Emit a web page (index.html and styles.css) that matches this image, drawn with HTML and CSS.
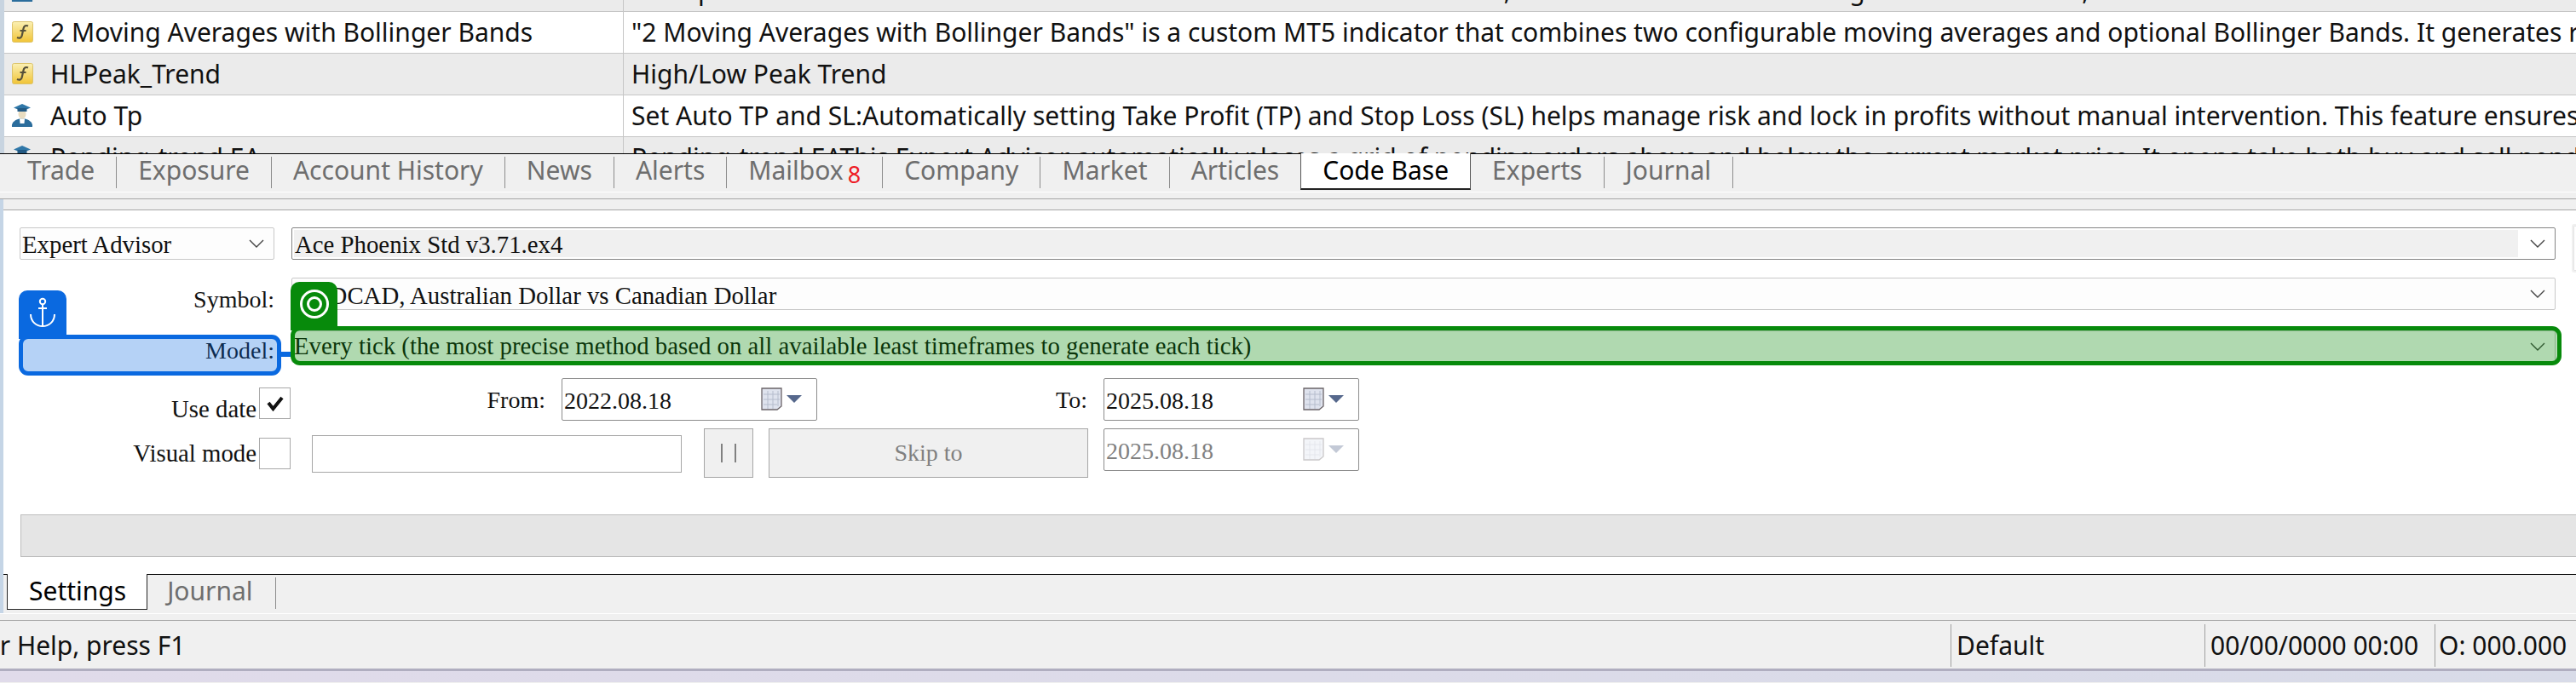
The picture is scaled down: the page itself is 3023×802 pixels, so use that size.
FILE: index.html
```html
<!DOCTYPE html>
<html lang="en">
<head>
    <meta charset="UTF-8">
    <title>Strategy Tester - Code Base</title>
    <link rel="stylesheet" href="styles.css">
</head>
<body>
    <!-- shared icons -->
    <svg class="defs" width="0" height="0">
        <defs>
            <linearGradient id="gold" x1="0" y1="0" x2="0" y2="1">
                <stop offset="0" stop-color="#fbf0b4"/>
                <stop offset="1" stop-color="#f1c436"/>
            </linearGradient>
            <symbol id="i-func" viewBox="0 0 25 25">
                <rect x="0.5" y="0.5" width="24" height="24" rx="2" fill="url(#gold)" stroke="#dcc36a"/>
                <path d="M19 5.5C15.5 4 14 6 13.4 9L11.8 16.5C11.2 19.5 9 20.5 6 19M9.5 11H16.5" fill="none" stroke="#55503a" stroke-width="2.2"/>
            </symbol>
            <symbol id="i-expert" viewBox="0 0 28 28">
                <path d="M2 28C1 22 7 19.5 10.5 18.5H17.5C21 19.5 27 22 26 28Z" fill="#2b6d9c"/>
                <path d="M11 18.5H17L16.5 24H11.500Z" fill="#fff"/>
                <ellipse cx="14" cy="13" rx="4.500" ry="5.500" fill="#e8dcc0"/>
                <path d="M14 1L24 5.500L14 9.500L4 5.500Z" fill="#2f77a8"/>
                <rect x="8.500" y="6" width="11" height="4" fill="#235a84"/>
            </symbol>
            <symbol id="i-chevron" viewBox="0 0 18 10">
                <path d="M1 1L9 9L17 1" fill="none" stroke="#444" stroke-width="1.400"/>
            </symbol>
            <symbol id="i-calendar" viewBox="0 0 48 27">
                <path d="M1 1H24V22L19 26H1Z" fill="#dfe3ee" stroke="#6b6468" stroke-width="1.300"/>
                <path d="M3 8H22M3 14H22M3 20H19M8 4V25M14 4V25M20 4V22" fill="none" stroke="#b5bccc"/>
                <path d="M30 9H48L39 18Z" fill="#56688c"/>
            </symbol>
        </defs>
    </svg>

    <!-- code base list, scrolled so the first and last rows are cut -->
    <section class="code-list">
        <div class="code-row alt first">
            <div class="code-name"><svg class="row-icon expert"><use href="#i-expert"/></svg>Trend Assistant</div>
            <div class="code-desc">An Expert Advisor that will start a trade in the direction of the main trend, and close the order on a target or on a reversal, or at the end of each session on time</div>
        </div>
        <div class="code-row">
            <div class="code-name"><svg class="row-icon"><use href="#i-func"/></svg>2 Moving Averages with Bollinger Bands</div>
            <div class="code-desc">"2 Moving Averages with Bollinger Bands" is a custom MT5 indicator that combines two configurable moving averages and optional Bollinger Bands. It generates real-time signals</div>
        </div>
        <div class="code-row alt">
            <div class="code-name"><svg class="row-icon"><use href="#i-func"/></svg>HLPeak_Trend</div>
            <div class="code-desc">High/Low Peak Trend</div>
        </div>
        <div class="code-row">
            <div class="code-name"><svg class="row-icon expert"><use href="#i-expert"/></svg>Auto Tp</div>
            <div class="code-desc">Set Auto TP and SL:Automatically setting Take Profit (TP) and Stop Loss (SL) helps manage risk and lock in profits without manual intervention. This feature ensures that</div>
        </div>
        <div class="code-row alt">
            <div class="code-name"><svg class="row-icon expert"><use href="#i-expert"/></svg>Pending-trend EA</div>
            <div class="code-desc">Pending-trend EAThis Expert Advisor automatically places a grid of pending orders above and below the current market price. It opens take both buy and sell pending orders</div>
        </div>
    </section>

    <nav class="tabs">
        <a class="tab">Trade</a>
        <a class="tab">Exposure</a>
        <a class="tab">Account History</a>
        <a class="tab">News</a>
        <a class="tab">Alerts</a>
        <a class="tab">Mailbox<span class="badge-count">8</span></a>
        <a class="tab">Company</a>
        <a class="tab">Market</a>
        <a class="tab">Articles</a>
        <a class="tab active">Code Base</a>
        <a class="tab">Experts</a>
        <a class="tab">Journal</a>
    </nav>

    <div class="band"></div>

    <div class="tester">
        <div class="tester-head"></div>

        <section class="panel">
            <div class="settings">
                <div class="select plain"><span>Expert Advisor</span><svg class="chevron"><use href="#i-chevron"/></svg></div>
                <div class="select strong">
                    <span class="select-text">Ace Phoenix Std v3.71.ex4</span>
                    <svg class="chevron"><use href="#i-chevron"/></svg>
                </div>
                <div class="side-stub"></div>

                <label class="field-label symbol-label">Symbol:</label>
                <div class="select plain symbol-select"><span>AUDCAD, Australian Dollar vs Canadian Dollar</span><svg class="chevron"><use href="#i-chevron"/></svg></div>
                <div></div>

                <label class="field-label model-label">Model:</label>
                <div class="select plain model-select"><span>Every tick (the most precise method based on all available least timeframes to generate each tick)</span><svg class="chevron"><use href="#i-chevron"/></svg></div>
                <div></div>
            </div>

            <div class="form-row date-row">
                <label class="check-label use-date">Use date</label>
                <span class="checkbox">
                    <svg width="20" height="18" viewBox="0 0 20 18"><path d="M2 8L7.500 15L18 2" fill="none" stroke="#111" stroke-width="4"/></svg>
                </span>
                <label class="date-label from-label">From:</label>
                <div class="date-box"><span>2022.08.18</span><svg class="calendar"><use href="#i-calendar"/></svg></div>
                <label class="date-label to-label">To:</label>
                <div class="date-box"><span>2025.08.18</span><svg class="calendar"><use href="#i-calendar"/></svg></div>
            </div>

            <div class="form-row visual-row">
                <label class="check-label visual-mode">Visual mode</label>
                <span class="checkbox"></span>
                <input class="speed-input" type="text">
                <button class="btn pause-btn" type="button"><span class="pause-bars"></span></button>
                <button class="btn skip-btn" type="button">Skip to</button>
                <div class="date-box disabled"><span>2025.08.18</span><svg class="calendar"><use href="#i-calendar"/></svg></div>
            </div>

            <div class="progress"></div>

            <!-- tutorial highlights over the form -->
            <div class="mark mark-blue">
                <div class="mark-tag">
                    <svg width="32" height="36" viewBox="0 0 32 36">
                        <circle cx="16" cy="5" r="3.200" fill="none" stroke="#fff" stroke-width="2"/>
                        <path d="M16 8V34M11 13H21M2 20C2 29 9 34 16 34C23 34 30 29 30 20" fill="none" stroke="#fff" stroke-width="2"/>
                    </svg>
                </div>
                <div class="mark-link"></div>
            </div>
            <div class="mark mark-green">
                <div class="mark-tag">
                    <svg width="36" height="36" viewBox="0 0 36 36">
                        <circle cx="18" cy="18" r="15.500" fill="none" stroke="#fff" stroke-width="3"/>
                        <circle cx="18" cy="18" r="7.500" fill="none" stroke="#fff" stroke-width="3"/>
                    </svg>
                </div>
            </div>
        </section>

        <nav class="sub-tabs">
            <a class="sub-tab active">Settings</a>
            <a class="sub-tab">Journal</a>
        </nav>
    </div>

    <div class="band"></div>

    <footer class="status">
        <div class="status-help"><span>For Help, press F1</span></div>
        <div class="status-cell profile">Default</div>
        <div class="status-cell stamp">00/00/0000 00:00</div>
        <div class="status-cell ohlc">O: 000.000</div>
    </footer>
    <div class="desktop"></div>
</body>
</html>
```

FILE: styles.css
```css
* {
    box-sizing: border-box;
}
html, body {
    margin: 0;
    padding: 0;
}
body {
    width: 3023px;
    height: 802px;
    overflow: hidden;
    background-color: #f0f0f0;
    font-family: "Noto Sans", sans-serif;
    font-size: 30px;
    color: #111;
}
.defs {
    position: absolute;
}

/* list */
.code-list {
    height: 180px;
    overflow: hidden;
    border-left: 5px solid;
    border-image: linear-gradient(to right, #c8d4e0 80%, #98a4b0 80%) 1;
    background-color: #fff;
}
.code-row {
    display: flex;
    height: 49px;
    border-bottom: 1px solid #c6c6c6;
    background-color: #fff;
    white-space: nowrap;
}
.code-row.first {
    margin-top: -35px;
}
.code-row.alt {
    background-color: #ebebeb;
}
.code-name {
    display: flex;
    align-items: center;
    flex: 0 0 727px;
    border-right: 1px solid #c6c6c6;
    padding-left: 9px;
    padding-bottom: 2px;
    overflow: hidden;
}
.code-desc {
    flex: 1;
    display: flex;
    align-items: center;
    padding-left: 9px;
    padding-bottom: 2px;
    overflow: hidden;
}
.row-icon {
    width: 25px;
    height: 25px;
    margin-right: 20px;
    flex: none;
}
.row-icon.expert {
    width: 28px;
    height: 28px;
    margin-left: -2px;
    margin-right: 19px;
}

/* main tabs */
.tabs {
    display: flex;
    height: 45px;
    padding-left: 6px;
    border-top: 1px solid #000;
    background-color: #f0f0f0;
}
.tab {
    height: 37px;
    margin-top: 3px;
    padding: 0 25px;
    border-right: 1px solid #8c8c8c;
    color: #6e6e6e;
    line-height: 32px;
    white-space: nowrap;
}
.tab:first-child {
    padding-left: 26px;
}
.tab.active {
    height: 43px;
    margin-top: -1px;
    margin-left: -1px;
    background-color: #fff;
    border-left: 1px solid #555;
    border-right: 1px solid #555;
    border-bottom: 2px solid #222;
    color: #000;
    line-height: 40px;
}
.badge-count {
    margin-left: 5px;
    font-size: 27px;
    color: #ee1c25;
    position: relative;
    top: 4px;
}
.band {
    height: 9px;
    border-top: 1px solid #fff;
    border-bottom: 1px solid #a6a6a6;
    background-color: #f0f0f0;
}

/* tester */
.tester {
    border-left: 4px solid #c5d5e6;
}
.tester-head {
    height: 13px;
    border-bottom: 1px solid #a6a6a6;
    background-color: #f0f0f0;
}
.panel {
    position: relative;
    height: 427px;
    background-color: #fff;
    font-family: "Liberation Serif", serif;
    font-size: 28px;
    padding-top: 20px;
    overflow: hidden;
}
.settings {
    display: grid;
    grid-template-columns: 299px 2657px 40px;
    grid-template-rows: 38px 41px 38px;
    column-gap: 20px;
    row-gap: 21px;
    margin-left: 19px;
    width: 3040px;
}
.select {
    display: flex;
    align-items: center;
    justify-content: space-between;
    height: 38px;
    padding: 0 11px 0 2px;
    border: 1px solid #c8c8c8;
    border-radius: 2px;
    background-color: #fdfdfd;
    font-size: 28.8px;
    white-space: nowrap;
}
.select span {
    padding-top: 2px;
}
.select.strong {
    border-color: #858585;
    background-color: #fff;
}
.select .select-text {
    flex: 0 0 2610px;
    height: 32px;
    line-height: 30px;
    padding-left: 1px;
    background-color: #f0f0f0;
}
.select.symbol-select span {
    padding-top: 4px;
}
.select.model-select span {
    padding-top: 0;
    padding-bottom: 2px;
}
.chevron {
    width: 18px;
    height: 10px;
    flex: none;
}
.side-stub {
    width: 40px;
    height: 57px;
    margin-top: -4px;
    margin-left: -1px;
    border: 2px solid #f0f0f0;
    border-right: 0;
    border-radius: 3px;
    outline: 1px solid #e4e4e4;
    outline-offset: -3px;
}
.field-label {
    text-align: right;
    line-height: 38px;
}
.symbol-label {
    padding-top: 7px;
}
.model-label {
    padding-top: 5px;
}

/* date + visual rows */
.form-row {
    display: flex;
    align-items: flex-start;
}
.date-row {
    height: 50px;
    margin-top: 18px;
}
.visual-row {
    height: 58px;
    margin-top: 9px;
}
.check-label {
    flex: 0 0 297px;
    font-size: 28.8px;
    text-align: right;
    line-height: 38px;
    white-space: nowrap;
}
.use-date {
    padding-top: 17px;
}
.visual-mode {
    padding-top: 10px;
}
.checkbox {
    display: flex;
    align-items: center;
    justify-content: center;
    width: 37px;
    height: 37px;
    margin-left: 3px;
    border: 1px solid #a8a8a8;
    background-color: #fff;
}
.date-row .checkbox {
    margin-top: 11px;
}
.visual-row .checkbox {
    margin-top: 11px;
}
.date-label {
    text-align: right;
    line-height: 50px;
    padding-top: 1px;
}
.from-label {
    flex: 0 0 299px;
    margin-right: 19px;
}
.to-label {
    flex: 0 0 317px;
    margin-right: 19px;
}
.date-box {
    display: flex;
    justify-content: space-between;
    width: 300px;
    height: 50px;
    padding: 0 17px 0 2px;
    border: 1px solid #8c8c8c;
    border-radius: 2px;
    line-height: 51px;
}
.calendar {
    width: 48px;
    height: 27px;
    margin-top: 10px;
}
.date-box.disabled {
    margin-left: 18px;
    color: #808080;
}
.date-box.disabled .calendar {
    opacity: 0.35;
}
.speed-input {
    width: 434px;
    height: 44px;
    margin: 8px 0 0 25px;
    padding: 0;
    border: 1px solid #a6a6a6;
    background-color: #fff;
}
.btn {
    height: 58px;
    padding: 0;
    border: 1px solid #a6a6a6;
    background-color: #f0f0f0;
    color: #808080;
    font: inherit;
}
.pause-btn {
    display: flex;
    align-items: center;
    justify-content: center;
    width: 58px;
    margin-left: 26px;
}
.pause-bars {
    width: 18px;
    height: 22px;
    border-left: 2px solid #808080;
    border-right: 2px solid #808080;
}
.skip-btn {
    width: 375px;
    margin-left: 18px;
}
.progress {
    width: 3100px;
    height: 50px;
    margin: 43px 0 0 20px;
    border: 1px solid #bdbdbd;
    background-color: #e5e5e5;
}

/* highlight frames */
.mark {
    position: absolute;
    border-width: 5px;
    border-style: solid;
    border-radius: 11px;
}
.mark-tag {
    position: absolute;
    display: flex;
    align-items: center;
    justify-content: center;
    left: -5px;
    bottom: 100%;
    height: 57px;
    padding-bottom: 5px;
    border-radius: 10px 10px 0 0;
}
.mark-blue {
    left: 18px;
    top: 146px;
    width: 308px;
    height: 48px;
    border-color: #0a69e0;
    background-color: rgba(10, 105, 224, 0.3);
}
.mark-blue .mark-tag {
    width: 56px;
    background-color: #0a69e0;
}
.mark-link {
    position: absolute;
    left: 100%;
    margin-left: 5px;
    top: 15px;
    width: 11px;
    height: 6px;
    background-color: #0a69e0;
}
.mark-green {
    left: 337px;
    top: 136px;
    width: 2665px;
    height: 46px;
    border-color: #078a0b;
    background-color: rgba(0, 135, 0, 0.3);
}
.mark-green .mark-tag {
    width: 55px;
    background-color: #078a0b;
}

/* bottom tabs */
.sub-tabs {
    display: flex;
    height: 46px;
    padding-left: 4px;
    border-top: 1px solid #000;
    background-color: #f0f0f0;
}
.sub-tab {
    height: 37px;
    margin-top: 3px;
    padding: 0 26px 0 23px;
    border-right: 1px solid #8c8c8c;
    color: #6e6e6e;
    line-height: 32px;
}
.sub-tab.active {
    height: 42px;
    margin-top: -1px;
    padding: 0 24px 0 25px;
    background-color: #fff;
    border-left: 1px solid #222;
    border-right: 1px solid #222;
    border-bottom: 1px solid #222;
    color: #000;
    line-height: 40px;
}

/* status bar */
.status {
    display: flex;
    height: 56px;
    background-color: #f0f0f0;
}
.status-help {
    flex: 0 0 2289px;
    overflow: hidden;
    line-height: 58px;
    white-space: nowrap;
}
.status-help span {
    margin-left: -34px;
}
.status-cell {
    height: 50px;
    margin-top: 4px;
    padding-left: 6px;
    border-left: 1px solid #a0a0a0;
    line-height: 50px;
    white-space: nowrap;
}
.profile {
    flex: 0 0 298px;
}
.stamp {
    flex: 0 0 270px;
}
.ohlc {
    flex: 1;
    padding-left: 4px;
}
.desktop {
    height: 16px;
    border-top: 3px solid #b0aec0;
    background: linear-gradient(to right, #e0dbea, #d8dbe8);
}
```
